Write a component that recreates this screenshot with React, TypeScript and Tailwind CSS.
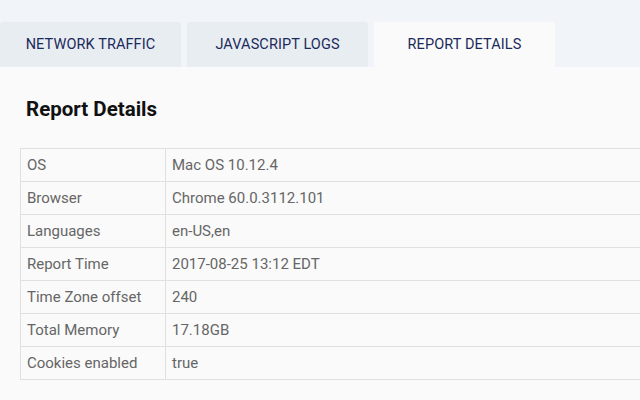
import React from 'react';

const rows: [string, string][] = [
    ['OS', 'Mac OS 10.12.4'],
    ['Browser', 'Chrome 60.0.3112.101'],
    ['Languages', 'en-US,en'],
    ['Report Time', '2017-08-25 13:12 EDT'],
    ['Time Zone offset', '240'],
    ['Total Memory', '17.18GB'],
    ['Cookies enabled', 'true'],
];

const tabs = ['NETWORK TRAFFIC', 'JAVASCRIPT LOGS', 'REPORT DETAILS'];

const App: React.FC = () => {
    return (
        <div className="w-[640px] h-[400px] overflow-hidden bg-[#f1f5f9] font-['Roboto',sans-serif]">
            {/* Tabs */}
            <div className="flex gap-[6px] pt-[22px] h-[67px]">
                {tabs.map((tab, i) => (
                    <div
                        key={tab}
                        className={`w-[181px] h-[45px] rounded-t-[3px] flex items-center justify-center text-[14.5px] tracking-[0.1px] text-[#1b2a5c] ${i === 2 ? 'bg-[#fafafa]' : 'bg-[#e8edf2]'}`}
                    >
                        {tab}
                    </div>
                ))}
            </div>

            {/* Content */}
            <div className="bg-[#fafafa] h-[333px] pl-[20px] pt-[30px]">
                <h1 className="pl-[6px] text-[20.5px] font-bold text-[#111] leading-[24px]">Report Details</h1>
                <table className="mt-[27px] w-[640px] border-collapse text-[15px] text-[#666]">
                    <tbody>
                        {rows.map(([k, v]) => (
                            <tr key={k} className="h-[33px]">
                                <td className="w-[145px] border border-[#e0e0e0] pl-[6px] pt-[1px]">{k}</td>
                                <td className="border border-[#e0e0e0] pl-[6px] pt-[1px]">{v}</td>
                            </tr>
                        ))}
                    </tbody>
                </table>
            </div>
        </div>
    );
};

export default App;
